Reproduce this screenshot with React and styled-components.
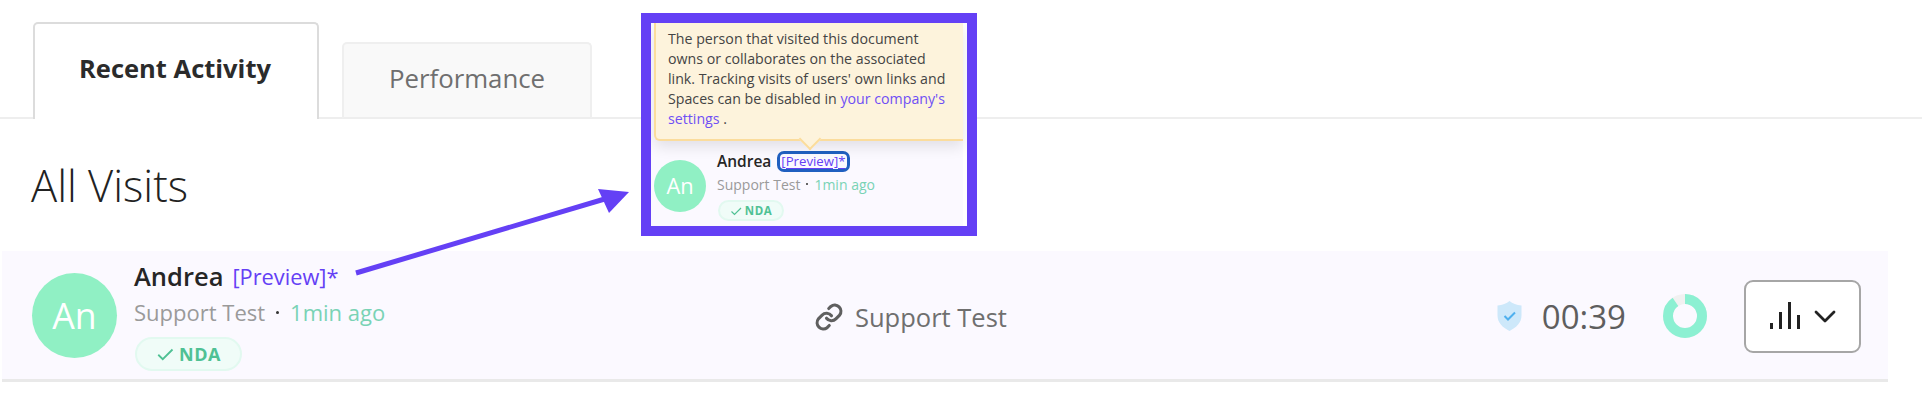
import React from "react";
import styled, { createGlobalStyle } from "styled-components";

const Global = createGlobalStyle`
  html, body { margin: 0; padding: 0; background: #fff; }
  body { font-family: "Open Sans", "Noto Sans", sans-serif; }
  * { box-sizing: border-box; }
`;

const Page = styled.div`
  position: relative;
  width: 1922px;
  height: 400px;
  overflow: hidden;
  background: #fff;
`;

const TabBar = styled.div`
  display: flex;
  align-items: flex-end;
  gap: 23px;
  height: 119px;
  padding: 0 0 0 33px;
  border-bottom: 2px solid #eeeeee;
`;

const Tab = styled.div`
  display: flex;
  align-items: center;
  justify-content: center;
  width: ${(p) => (p.$active ? 286 : 250)}px;
  height: ${(p) => (p.$active ? 97 : 77)}px;
  margin-bottom: -2px;
  padding: 0 ${(p) => (p.$active ? 2 : 0)}px ${(p) => (p.$active ? 8 : 6)}px 0;
  border: 2px solid ${(p) => (p.$active ? "#dcdcdc" : "#efefef")};
  border-bottom: ${(p) => (p.$active ? "none" : "2px solid #eeeeee")};
  border-radius: 5px 5px 0 0;
  background: ${(p) => (p.$active ? "#fff" : "#f9f9f9")};
  color: ${(p) => (p.$active ? "#2b2b2b" : "#6f6f6f")};
  font-size: ${(p) => (p.$active ? 25.5 : 25.8)}px;
  font-weight: ${(p) => (p.$active ? 700 : 400)};
`;

const Heading = styled.h1`
  margin: 36px 0 0 31px;
  height: 96px;
  color: #222;
  font-size: 43.5px;
  line-height: 62px;
  font-weight: 300;
`;

const Row = styled.div`
  display: flex;
  align-items: center;
  width: 1886px;
  height: 131px;
  margin-left: 2px;
  padding: 0 27px 0 30px;
  background: #fbf9ff;
  border-bottom: 3px solid #e9e9e9;
`;

const Avatar = styled.div`
  flex: none;
  display: flex;
  align-items: center;
  justify-content: center;
  width: ${(p) => p.$size}px;
  height: ${(p) => p.$size}px;
  border-radius: 50%;
  background: #90f0c4;
  color: #fff;
  font-size: ${(p) => p.$size * 0.42}px;
`;

const Info = styled.div`
  display: flex;
  flex-direction: column;
  align-items: flex-start;
  margin-left: ${(p) => (p.$small ? 11 : 17)}px;
  margin-top: ${(p) => (p.$small ? 0 : -1)}px;
`;

const NameLine = styled.div`
  display: flex;
  align-items: center;
  gap: ${(p) => (p.$small ? 7 : 9)}px;
  height: ${(p) => (p.$small ? 22 : 36)}px;
`;

const Name = styled.span`
  color: #262626;
  font-size: ${(p) => (p.$small ? 15.5 : 25.5)}px;
  font-weight: 600;
`;

const Preview = styled.span`
  color: #6440f5;
  font-size: ${(p) => (p.$small ? 13.2 : 21.8)}px;
  ${(p) =>
    p.$small &&
    `
    margin-left: 2px;
    padding: 0 1px;
    line-height: 15px;
    border-radius: 4px;
    outline: 3px solid #2060c0;
    text-decoration: underline;
    text-decoration-thickness: 1px;
    text-underline-offset: 2px;
  `}
`;

const SubLine = styled.div`
  display: flex;
  align-items: center;
  gap: ${(p) => (p.$small ? 6 : 11)}px;
  height: ${(p) => (p.$small ? 22 : 36)}px;
  margin-top: ${(p) => (p.$small ? 1 : 0)}px;
  color: #9a9a9a;
  font-size: ${(p) => (p.$small ? 14 : 22)}px;
`;

const Dot = styled.span`
  width: ${(p) => (p.$small ? 2 : 3)}px;
  height: ${(p) => (p.$small ? 2 : 3)}px;
  border-radius: 50%;
  background: #333;
`;

const Time = styled.span`
  color: #79d3b5;
`;

const NdaPill = styled.div`
  display: flex;
  align-items: center;
  justify-content: center;
  gap: ${(p) => (p.$small ? 3 : 5)}px;
  width: ${(p) => (p.$small ? 66 : 107)}px;
  height: ${(p) => (p.$small ? 21 : 34)}px;
  margin-top: ${(p) => (p.$small ? 5 : 7)}px;
  margin-left: 1px;
  border: 2px solid #e2f9f0;
  border-radius: 17px;
  background: #f0fcf8;
  color: #4fc194;
  font-size: ${(p) => (p.$small ? 11.5 : 18)}px;
  font-weight: 700;
  letter-spacing: 0.5px;
`;

const LinkBlock = styled.div`
  position: absolute;
  left: 814px;
  top: 300px;
  display: flex;
  align-items: center;
  gap: 11px;
  color: #6f6f6f;
  font-size: 25.5px;
`;

const Stats = styled.div`
  display: flex;
  align-items: center;
  margin-left: auto;
  margin-top: 2px;
`;

const Duration = styled.span`
  margin: 0 37px 0 20px;
  color: #5e5e5e;
  font-size: 33px;
  font-weight: 400;
`;

const MenuButton = styled.div`
  display: flex;
  align-items: center;
  justify-content: center;
  gap: 14px;
  width: 117px;
  height: 73px;
  margin-left: 37px;
  border: 2px solid #a6a6a6;
  border-radius: 9px;
  background: #fff;
`;

const Callout = styled.div`
  position: absolute;
  left: 641px;
  top: 13px;
  width: 336px;
  height: 223px;
  border: 10px solid #6440f5;
  background: #fff;
  overflow: hidden;
`;

const CalloutPanel = styled.div`
  height: 100%;
  margin-right: 4px;
  background: #fbf9ff;
`;

const Tooltip = styled.div`
  position: relative;
  width: 309px;
  height: 118px;
  margin-left: 3px;
  padding: 6px 6px 0 12px;
  background: #fdf3dc;
  border-bottom: 2px solid #fbdc9c;
  border-left: 2px solid #fbdc9c;
  border-radius: 0 0 0 6px;
  box-shadow: 0 6px 14px rgba(0, 0, 0, 0.1);
  color: #444;
  font-size: 14.2px;
  line-height: 19.9px;
`;

const TooltipLink = styled.span`
  color: #6f4ff5;
`;

const TooltipArrow = styled.span`
  position: absolute;
  left: 146px;
  top: 108px;
  width: 16px;
  height: 16px;
  background: #fdf3dc;
  border-right: 2px solid #fbdc9c;
  border-bottom: 2px solid #fbdc9c;
  transform: rotate(45deg);
`;

const MiniRow = styled.div`
  display: flex;
  align-items: center;
  margin-top: 9px;
  padding-left: 3px;
`;

const ArrowArt = styled.svg`
  position: absolute;
  left: 0;
  top: 0;
  pointer-events: none;
`;

const Check = ({ size }) => (
  <svg width={size} height={size} viewBox="0 0 24 24" fill="none" stroke="#4fc194" strokeWidth="2.4">
    <path d="M3 13l6 6L22 6" />
  </svg>
);

const Shield = () => (
  <svg width="25" height="30" viewBox="0 0 25 30">
    <path d="M12.5 0c3 2.500 7 4 12 4.500v10c0 7-5 12-12 15.500C5.500 26.500.5 21.500.5 14.500v-10C5.500 4 9.500 2.500 12.500 0z" fill="#cde8fa" />
    <path d="M7.500 15l3.500 3.500 7-7" fill="none" stroke="#4fb0ee" strokeWidth="2" />
  </svg>
);

const Donut = () => (
  <svg width="44" height="44" viewBox="0 0 44 44">
    <circle cx="22" cy="22" r="17" fill="none" stroke="#f1f1f1" strokeWidth="10" />
    <circle
      cx="22"
      cy="22"
      r="17"
      fill="none"
      stroke="#8cf0d2"
      strokeWidth="10"
      strokeDasharray="96 107"
      transform="rotate(-90 22 22)"
    />
  </svg>
);

const LinkIcon = () => (
  <svg width="30" height="30" viewBox="0 0 24 24" fill="none" stroke="#5f5f5f" strokeWidth="2.500" strokeLinecap="round" strokeLinejoin="round">
    <path d="M10 13a5 5 0 0 0 7.500.5l3-3a5 5 0 0 0-7-7l-1.700 1.700" />
    <path d="M14 11a5 5 0 0 0-7.500-.5l-3 3a5 5 0 0 0 7 7l1.700-1.700" />
  </svg>
);

const Bars = () => (
  <svg width="30" height="28" viewBox="0 0 30 28" fill="#222">
    <rect x="0" y="21" width="3" height="6" />
    <rect x="9" y="10" width="3" height="17" />
    <rect x="18" y="0" width="3" height="27" />
    <rect x="27" y="13" width="3" height="14" />
  </svg>
);

const Chevron = () => (
  <svg width="22" height="13" viewBox="0 0 22 13" fill="none" stroke="#222" strokeWidth="2.800" strokeLinecap="round" strokeLinejoin="round">
    <path d="M2 2l9 9 9-9" />
  </svg>
);

export default function App() {
  return (
    <Page>
      <Global />
      <TabBar>
        <Tab $active>Recent Activity</Tab>
        <Tab>Performance</Tab>
      </TabBar>
      <Heading>All Visits</Heading>
      <Row>
        <Avatar $size={85}>An</Avatar>
        <Info>
          <NameLine>
            <Name>Andrea</Name>
            <Preview>[Preview]*</Preview>
          </NameLine>
          <SubLine>
            <span>Support Test</span>
            <Dot />
            <Time>1min ago</Time>
          </SubLine>
          <NdaPill>
            <Check size={18} />
            NDA
          </NdaPill>
        </Info>
        <Stats>
          <Shield />
          <Duration>00:39</Duration>
          <Donut />
          <MenuButton>
            <Bars />
            <Chevron />
          </MenuButton>
        </Stats>
      </Row>
      <LinkBlock>
        <LinkIcon />
        Support Test
      </LinkBlock>
      <ArrowArt width="1922" height="400" viewBox="0 0 1922 400">
        <line x1="356" y1="273" x2="608" y2="198" stroke="#6440f5" strokeWidth="5" />
        <polygon points="598,189 629,192 609,213" fill="#6440f5" />
      </ArrowArt>
      <Callout>
        <CalloutPanel>
          <Tooltip>
            The person that visited this document
            <br />
            owns or collaborates on the associated
            <br />
            link. Tracking visits of users' own links and
            <br />
            Spaces can be disabled in <TooltipLink>your company's</TooltipLink>
            <br />
            <TooltipLink>settings</TooltipLink> .
            <TooltipArrow />
          </Tooltip>
          <MiniRow>
            <Avatar $size={52}>An</Avatar>
            <Info $small>
              <NameLine $small>
                <Name $small>Andrea</Name>
                <Preview $small>[Preview]*</Preview>
              </NameLine>
              <SubLine $small>
                <span>Support Test</span>
                <Dot $small />
                <Time>1min ago</Time>
              </SubLine>
              <NdaPill $small>
                <Check size={12} />
                NDA
              </NdaPill>
            </Info>
          </MiniRow>
        </CalloutPanel>
      </Callout>
    </Page>
  );
}
